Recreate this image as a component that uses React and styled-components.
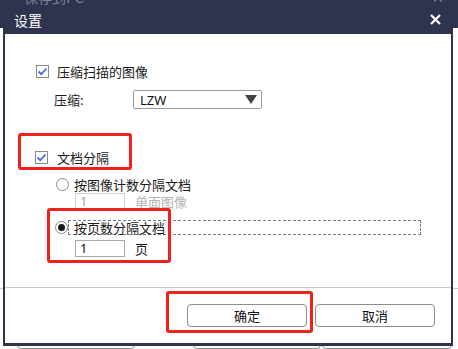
import React from "react";
import styled, { createGlobalStyle } from "styled-components";

const Global = createGlobalStyle`
  html, body { margin: 0; padding: 0; background: #ffffff; }
  body { font-family: "Noto Sans CJK SC", "Noto Sans", sans-serif; }
  * { box-sizing: border-box; }
`;

const Page = styled.div`
  position: relative;
  width: 458px;
  height: 349px;
  overflow: hidden;
  background: #ffffff;
`;

const BackWindow = styled.div`
  display: flex;
  flex-direction: column;
  width: 458px;
  height: 349px;
`;

const BackTitle = styled.div`
  height: 45px;
  background: #2e334e;
  color: #7f8398;
  font-size: 14px;
  display: flex;
  justify-content: space-between;
  padding: 0 14px 0 24px;
  line-height: 0px;
  & > span { margin-top: -3px; }
`;

const BackBody = styled.div`
  flex: 1;
  display: flex;
  flex-direction: column;
`;

const BackRule = styled.div`
  margin-top: 260px;
  height: 1px;
  background: #c8c8c8;
`;

const BackButtons = styled.div`
  margin-top: 40px;
  display: flex;
  padding-left: 17px;
`;

const BackButton = styled.div`
  width: ${(p) => p.$w}px;
  margin-right: ${(p) => p.$mr}px;
  height: 20px;
  border: 1px solid #8c8c8c;
  border-radius: 4px;
`;

const Dialog = styled.div`
  position: absolute;
  left: 3px;
  top: 5px;
  width: 450px;
  height: 341px;
  background: #2e334e;
  display: flex;
  flex-direction: column;
  padding: 0 2px 3px 2px;
`;

const TitleBar = styled.div`
  height: 29px;
  display: flex;
  align-items: center;
  justify-content: space-between;
  padding: 0 10px 0 9px;
  color: #ffffff;
  font-size: 14px;
`;

const Content = styled.div`
  position: relative;
  flex: 1;
  background: #ffffff;
  display: flex;
  flex-direction: column;
  color: #1a1a1a;
  font-size: 13px;
`;

const Row = styled.div`
  display: flex;
  align-items: center;
  height: ${(p) => p.$h}px;
  margin-top: ${(p) => p.$mt}px;
  padding-left: ${(p) => p.$pl}px;
  gap: ${(p) => p.$gap || 0}px;
`;

const Box = styled.span`
  width: 13px;
  height: 13px;
  border: 1px solid #8a8a8a;
  background: #fff;
  display: flex;
  align-items: center;
  justify-content: center;
  flex: none;
`;

const Radio = styled.span`
  width: 13px;
  height: 13px;
  border-radius: 50%;
  border: 1px solid #8a8a8a;
  background: #fff;
  display: flex;
  align-items: center;
  justify-content: center;
  flex: none;
  &::after {
    content: "";
    display: ${(p) => (p.$on ? "block" : "none")};
    width: 7px;
    height: 7px;
    border-radius: 50%;
    background: #1a1a1a;
  }
`;

const Label = styled.span`
  color: ${(p) => (p.$muted ? "#b4b4b4" : "#1a1a1a")};
  line-height: 13px;
  white-space: nowrap;
`;

const Select = styled.div`
  width: 129px;
  height: 19px;
  border: 1px solid #9a9a9a;
  border-radius: 2px;
  display: flex;
  align-items: center;
  justify-content: space-between;
  padding: 0 4px 0 6px;
  font-family: "Noto Sans", "Liberation Sans", sans-serif;
  font-size: 13px;
  color: #111;
`;

const Arrow = styled.span`
  width: 0;
  height: 0;
  border-left: 6px solid transparent;
  border-right: 6px solid transparent;
  border-top: 9px solid #444;
`;

const NumInput = styled.div`
  width: 50px;
  height: 17px;
  border: 1px solid ${(p) => (p.$disabled ? "#cfcfcf" : "#a8a8a8")};
  color: ${(p) => (p.$disabled ? "#a0a0a0" : "#111")};
  font-family: "Noto Sans", "Liberation Sans", sans-serif;
  font-size: 13px;
  line-height: 15px;
  padding-left: 4px;
`;

const Focus = styled.div`
  width: 353px;
  height: 15px;
  border: 1px dashed #7a7a7a;
  display: flex;
  align-items: center;
  padding-left: 5px;
`;

const Rule = styled.div`
  margin-top: 30px;
  height: 1px;
  background: #c8c8c8;
`;

const Footer = styled.div`
  margin-top: 16px;
  display: flex;
  justify-content: flex-end;
  gap: 8px;
  padding-right: 16px;
`;

const Button = styled.div`
  width: 120px;
  height: 23px;
  border: 1px solid #8c8c8c;
  border-radius: 4px;
  display: flex;
  align-items: center;
  justify-content: center;
  font-size: 13px;
  color: #111;
`;

const Mark = styled.div`
  position: absolute;
  left: ${(p) => p.$x}px;
  top: ${(p) => p.$y}px;
  width: ${(p) => p.$w}px;
  height: ${(p) => p.$h}px;
  border: 3px solid #f0211c;
  border-radius: 3px;
  pointer-events: none;
`;

const Check = () => (
  <svg width="11" height="9" viewBox="0 0 11 9">
    <path d="M1.5 4.5 L4.2 7.2 L9.5 1.5" fill="none" stroke="#3d6fe0" strokeWidth="1.8" />
  </svg>
);

const Close = () => (
  <svg width="11" height="11" viewBox="0 0 11 11">
    <path d="M1 1 L10 10 M10 1 L1 10" stroke="#fff" strokeWidth="2.2" />
  </svg>
);

export default function App() {
  return (
    <Page>
      <Global />
      <BackWindow>
        <BackTitle>
          <span>保存到PC</span>
          <span>✕</span>
        </BackTitle>
        <BackBody>
          <BackRule />
          <BackButtons>
            <BackButton $w={118} $mr={58} />
            <BackButton $w={128} $mr={1} />
            <BackButton $w={130} $mr={0} />
          </BackButtons>
        </BackBody>
      </BackWindow>
      <Dialog>
        <TitleBar>
          <span>设置</span>
          <Close />
        </TitleBar>
        <Content>
          <Row $h={14} $mt={30} $pl={31} $gap={8}>
            <Box><Check /></Box>
            <Label>压缩扫描的图像</Label>
          </Row>
          <Row $h={19} $mt={12} $pl={49}>
            <Label style={{ width: 79 }}>压缩:</Label>
            <Select>
              <span>LZW</span>
              <Arrow />
            </Select>
          </Row>
          <Row $h={13} $mt={42} $pl={30} $gap={9}>
            <Box><Check /></Box>
            <Label>文档分隔</Label>
          </Row>
          <Row $h={13} $mt={14} $pl={51} $gap={5}>
            <Radio />
            <Label>按图像计数分隔文档</Label>
          </Row>
          <Row $h={17} $mt={2} $pl={70} $gap={10}>
            <NumInput $disabled>1</NumInput>
            <Label $muted>单面图像</Label>
          </Row>
          <Row $h={15} $mt={10} $pl={50}>
            <Radio $on />
            <Focus>
              <Label>按页数分隔文档</Label>
            </Focus>
          </Row>
          <Row $h={17} $mt={5} $pl={70} $gap={10}>
            <NumInput>1</NumInput>
            <Label>页</Label>
          </Row>
          <Rule />
          <Footer>
            <Button>确定</Button>
            <Button>取消</Button>
          </Footer>
          <Mark $x={13} $y={99} $w={114} $h={37} />
          <Mark $x={42} $y={174} $w={124} $h={55} />
          <Mark $x={161} $y={257} $w={147} $h={42} />
        </Content>
      </Dialog>
    </Page>
  );
}
